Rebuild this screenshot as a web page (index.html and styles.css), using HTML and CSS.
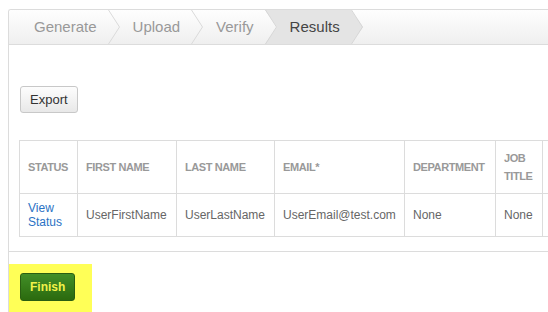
FILE: index.html
```html
<!DOCTYPE html>
<html lang="en">
<head>
    <meta charset="UTF-8">
    <title>Import Users - Results</title>
    <link rel="stylesheet" href="styles.css">
</head>
<body>
    <div class="panel">
        <div class="steps">
            <span class="step first">Generate</span>
            <svg class="chevron" width="12" height="34" viewBox="0 0 12 34">
                <polyline points="0.5,0 11.5,17 0.5,34" fill="none" stroke="#dadada"/>
            </svg>
            <span class="step">Upload</span>
            <svg class="chevron" width="12" height="34" viewBox="0 0 12 34">
                <polyline points="0.5,0 11.5,17 0.5,34" fill="none" stroke="#dadada"/>
            </svg>
            <span class="step">Verify</span>
            <svg class="chevron" width="12" height="34" viewBox="0 0 12 34">
                <polygon points="0,0 12,0 12,34 0,34 12,17" fill="#e4e4e4"/>
                <polyline points="0.5,0 11.5,17 0.5,34" fill="none" stroke="#d6d6d6"/>
            </svg>
            <span class="step active">Results</span>
            <svg class="chevron" width="12" height="34" viewBox="0 0 12 34">
                <polygon points="0,0 12,17 0,34" fill="#e4e4e4"/>
                <polyline points="0.5,0 11.5,17 0.5,34" fill="none" stroke="#d6d6d6"/>
            </svg>
        </div>

        <div class="content">
            <button class="btn">Export</button>
            <table class="table">
                <thead>
                    <tr>
                        <th class="c-status">Status</th>
                        <th class="c-first">First Name</th>
                        <th class="c-last">Last Name</th>
                        <th class="c-email">Email*</th>
                        <th class="c-dept">Department</th>
                        <th class="c-job">Job Title</th>
                        <th class="c-more"></th>
                    </tr>
                </thead>
                <tbody>
                    <tr>
                        <td><a href="#">View Status</a></td>
                        <td>UserFirstName</td>
                        <td>UserLastName</td>
                        <td>UserEmail@test.com</td>
                        <td>None</td>
                        <td>None</td>
                        <td></td>
                    </tr>
                </tbody>
            </table>
        </div>

        <div class="footer">
            <div class="highlight">
                <button class="btn btn-finish">Finish</button>
            </div>
        </div>
    </div>
</body>
</html>
```

FILE: styles.css
```css
body {
    font-family: "Liberation Sans", Arial, sans-serif;
    background-color: #fff;
    margin: 0;
    padding: 9px 0 0 8px;
    height: 312px;
    box-sizing: border-box;
    overflow: hidden;
}
.panel {
    height: 303px;
    box-sizing: border-box;
    border: 1px solid #dcdcdc;
    border-right: none;
    border-bottom: none;
    border-radius: 3px 0 0 0;
    overflow: hidden;
}
.steps {
    display: flex;
    height: 34px;
    background: linear-gradient(#fefefe, #efefef);
    border-bottom: 1px solid #dcdcdc;
}
.chevron {
    display: block;
    flex: none;
}
.step {
    font-size: 15px;
    line-height: 34px;
    color: #999;
    padding: 0 11px 0 13px;
}
.step.first {
    padding-left: 25px;
}
.step.active {
    color: #444;
    background-color: #e4e4e4;
}
.content {
    padding: 41px 0 14px 10px;
}
.btn {
    display: block;
    font-family: "Liberation Sans", Arial, sans-serif;
    font-size: 13px;
    color: #333;
    height: 27px;
    padding: 0 9px;
    margin-left: 1px;
    background: linear-gradient(#fdfdfd, #e8e8e8);
    border: 1px solid #c8c8c8;
    border-radius: 3px;
}
.table {
    margin-top: 27px;
    border-collapse: collapse;
    table-layout: fixed;
    width: 584px;
}
.table th, .table td {
    border: 1px solid #dcdcdc;
    padding: 8px;
    text-align: left;
    vertical-align: middle;
}
.table th {
    font-size: 11px;
    line-height: 18px;
    letter-spacing: -0.4px;
    text-transform: uppercase;
    color: #999;
}
.table td {
    font-size: 12px;
    line-height: 14px;
    color: #666;
    padding-top: 7px;
    padding-bottom: 7px;
}
.table a {
    color: #2a72c4;
    text-decoration: none;
}
.c-status { width: 41px; }
.c-first { width: 82px; }
.c-last { width: 81px; }
.c-email { width: 113px; }
.c-dept { width: 74px; }
.c-job { width: 30px; }
.c-more { width: 60px; }
.footer {
    border-top: 1px solid #dcdcdc;
    padding-top: 12px;
}
.highlight {
    display: inline-block;
    background-color: #ffff57;
    padding: 9px 17px 11px 11px;
}
.btn-finish {
    margin: 0;
    height: 28px;
    padding: 0 9px;
    font-size: 12px;
    font-weight: bold;
    color: #f2f24a;
    background: linear-gradient(#428f28, #2b6a0e);
    border: 1px solid #2a5e12;
    border-radius: 3px;
}
```
